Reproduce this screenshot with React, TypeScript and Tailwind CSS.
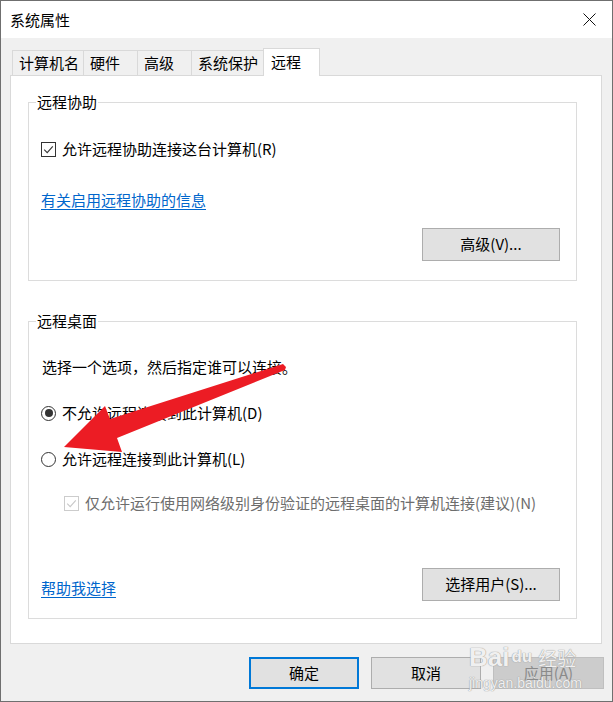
import React from "react";

function CheckBox({ disabled }: { disabled?: boolean }) {
  const c = disabled ? "#c8c8c8" : "#333333";
  return (
    <span
      className={`inline-flex w-[15px] h-[15px] shrink-0 items-center justify-center border bg-white ${
        disabled ? "border-[#cccccc]" : "border-[#333333]"
      }`}
    >
      <svg width="11" height="11" viewBox="0 0 11 11">
        <path d="M1.2 5.6 L4.2 8.6 L9.8 2.4" fill="none" stroke={c} strokeWidth="1.1" />
      </svg>
    </span>
  );
}

function Radio({ checked }: { checked?: boolean }) {
  return (
    <span className="inline-flex w-[15px] h-[15px] shrink-0 items-center justify-center rounded-full border border-[#333333] bg-white">
      {checked && <span className="block w-[8px] h-[8px] rounded-full bg-[#333333]" />}
    </span>
  );
}

function Btn({ children, className = "" }: { children: React.ReactNode; className?: string }) {
  return (
    <div
      className={`flex items-center justify-center border border-[#adadad] bg-[#e1e1e1] text-black ${className}`}
    >
      {children}
    </div>
  );
}

function Group({
  title,
  className = "",
  children,
}: {
  title: string;
  className?: string;
  children: React.ReactNode;
}) {
  return (
    <div className={`relative border border-[#dcdcdc] ${className}`}>
      <span className="absolute -top-[11px] left-[7px] bg-white px-[1px] leading-[20px]">{title}</span>
      {children}
    </div>
  );
}

export default function App() {
  const tabs = [
    { t: "计算机名", w: "w-[72px]" },
    { t: "硬件", w: "w-[55px]" },
    { t: "高级", w: "w-[55px]" },
    { t: "系统保护", w: "w-[73px]" },
  ];
  return (
    <div className="relative w-[613px] h-[702px] overflow-hidden border border-[#6f6f6f] bg-[#f0f0f0] text-[15px] text-black font-['Microsoft_YaHei','Noto_Sans_CJK_SC',sans-serif] flex flex-col">
      {/* title bar */}
      <div className="h-[37px] shrink-0 bg-white flex items-center justify-between pl-[9px] pr-[16px]">
        <span className="leading-[20px]">系统属性</span>
        <svg width="13" height="13" viewBox="0 0 13 13">
          <path d="M0.5 0.5 L12.5 12.5 M12.5 0.5 L0.5 12.5" stroke="#111" strokeWidth="1" fill="none" />
        </svg>
      </div>

      {/* body */}
      <div className="flex-1 flex flex-col pl-[9px] pr-[10px] pt-[10px]">
        {/* tabs */}
        <div className="flex items-end h-[27px] pl-[2px] relative z-10">
          {tabs.map((tb) => (
            <div
              key={tb.t}
              className={`${tb.w} h-[25px] -mr-px border border-b-0 border-[#d9d9d9] bg-[#f0f0f0] pl-[6px] leading-[24px]`}
            >
              {tb.t}
            </div>
          ))}
          <div className="w-[57px] h-[28px] -mb-px border border-b-0 border-[#d9d9d9] bg-white pl-[7px] leading-[26px]">
            远程
          </div>
        </div>

        {/* panel */}
        <div className="h-[569px] border border-[#d9d9d9] bg-white pl-[17px] pr-[24px] pt-[26px] flex flex-col">
          <Group title="远程协助" className="h-[179px] flex flex-col">
            <div className="flex items-center gap-[6px] pl-[12px] mt-[36px] h-[20px] leading-[20px]">
              <CheckBox />
              <span>允许远程协助连接这台计算机(R)</span>
            </div>
            <div className="pl-[12px] mt-[31px] h-[20px] leading-[20px]">
              <span className="text-[#0066cc] underline underline-offset-[3px]">有关启用远程协助的信息</span>
            </div>
            <div className="flex justify-end pr-[16px] mt-[18px]">
              <Btn className="w-[138px] h-[33px]">高级(V)...</Btn>
            </div>
          </Group>

          <Group title="远程桌面" className="h-[298px] mt-[40px] flex flex-col">
            <div className="pl-[13px] mt-[35px] h-[20px] leading-[20px]">选择一个选项，然后指定谁可以连接。</div>
            <div className="flex items-center gap-[6px] pl-[12px] mt-[26px] h-[20px] leading-[20px]">
              <Radio checked />
              <span>不允许远程连接到此计算机(D)</span>
            </div>
            <div className="flex items-center gap-[6px] pl-[12px] mt-[26px] h-[20px] leading-[20px]">
              <Radio />
              <span>允许远程连接到此计算机(L)</span>
            </div>
            <div className="flex items-center gap-[6px] pl-[35px] mt-[24px] h-[20px] leading-[20px] text-[#6d6d6d]">
              <CheckBox disabled />
              <span>仅允许运行使用网络级别身份验证的远程桌面的计算机连接(建议)(N)</span>
            </div>
            <div className="flex items-center justify-between pl-[12px] pr-[16px] mt-[55px]">
              <span className="mt-[7px] leading-[20px] text-[#0066cc] underline underline-offset-[3px]">帮助我选择</span>
              <Btn className="w-[138px] h-[33px]">选择用户(S)...</Btn>
            </div>
          </Group>
        </div>

        {/* bottom buttons */}
        <div className="flex justify-end gap-[12px] mt-[13px] -mr-[2px]">
          <div className="w-[110px] h-[32px] flex items-center justify-center border-2 border-[#0078d7] bg-[#e1e1e1]">
            确定
          </div>
          <Btn className="w-[110px] h-[32px]">取消</Btn>
          <div className="w-[111px] h-[32px] flex items-center justify-center border border-[#bfbfbf] bg-[#cccccc] text-[#8a8a8a]">
            应用(A)
          </div>
        </div>
      </div>

      {/* red arrow annotation */}
      <svg className="absolute left-0 top-0 pointer-events-none" width="613" height="702" viewBox="0 0 613 702">
        <polygon
          points="63,446 104,405 109,418 282,363 285,366 284,369 116,437 121,451"
          fill="#ec1c24"
        />
      </svg>

      {/* watermark */}
      <div className="absolute left-[468px] top-[640px] pointer-events-none flex flex-col items-start text-white/85 [text-shadow:0_0_1px_#9a9a9a,0_0_1px_#9a9a9a]">
        <div className="flex items-end h-[28px] leading-[24px] font-['Liberation_Sans',sans-serif] font-bold">
          <span className="text-[26px]">Bai</span>
          <span className="text-[17px] ml-[2px]">du</span>
          <span className="text-[19px] leading-[22px] ml-[6px] font-normal font-['Noto_Sans_CJK_SC',sans-serif]">经验</span>
        </div>
        <span className="text-[14px] leading-[16px] mt-[6px] font-['Liberation_Sans',sans-serif]">jingyan.baidu.com</span>
      </div>
    </div>
  );
}
